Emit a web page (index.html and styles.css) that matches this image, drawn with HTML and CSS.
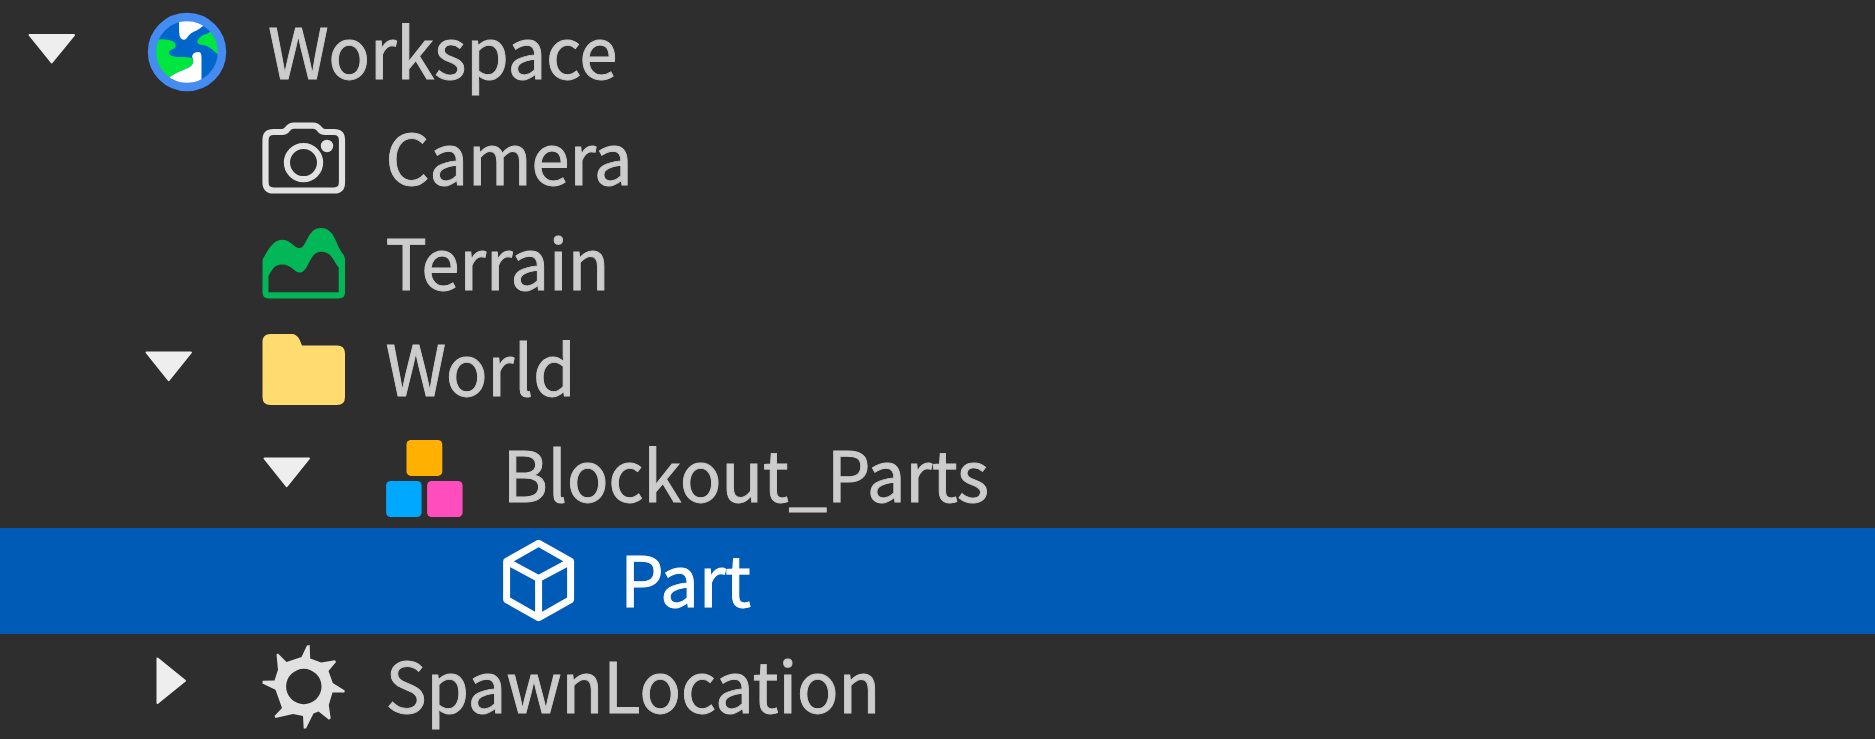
FILE: index.html
```html
<!DOCTYPE html>
<html lang="en">
<head>
<meta charset="utf-8">
<title>Explorer</title>
<link rel="stylesheet" href="styles.css">
</head>
<body>
<ul class="tree">
  <li class="row level-0">
    <svg class="twisty" viewBox="0 0 48 105.7"><path d="M1.5 35H46L23.700 62.5Z"/></svg>
    <svg class="icon" viewBox="0 0 84 105.7">
      <circle cx="42" cy="52" r="35" fill="#0066cc"/>
      <path fill="#fff" d="M34 20L48 18.500L60 25C56 27 54 29.500 50.500 31C45 33 43.500 36 41.500 38.500C39.500 40.500 36.500 40 35 37C34 34 34 29 34 20Z"/>
      <path fill="#00e640" d="M66 31C62 35 57 34 53.500 39C51 43 53 44.500 58 45C65 46 68 51 75 56L77 45Z"/>
      <path fill="#00e640" d="M11 40C16 38.500 25 39.500 29 42C32 45 31 48.500 27 49.500C23 50.500 23 54.500 27 56C33 58 40 56 47 58C50 62 48 65 43 68C36 71 30 73 25 78L12 70L8 50Z"/>
      <path fill="#fff" d="M24 78C30 73 36 71 43 68C48 65 49 63 48 59C46 56 48 52 53 52C56 52 56.500 54 56.500 58V80L42 86Z"/>
      <circle cx="42" cy="52" r="35" fill="none" stroke="#448bf2" stroke-width="8.400"/>
    </svg>
    <span class="label">Workspace</span>
  </li>
  <li class="row level-1">
    <span class="twisty"></span>
    <svg class="icon" viewBox="0 0 84 105.7">
      <g fill="none" stroke="#e1e1e1" stroke-width="6.200">
        <path d="M11.500 26H20C27 26 24 19.600 32 19.600H51C59 19.600 56 26 63 26H72Q80 26 80 34V76.500Q80 84.500 72 84.500H11.500Q3.500 84.500 3.500 76.500V34Q3.500 26 11.500 26Z"/>
        <circle cx="41.500" cy="56.600" r="16.600"/>
      </g>
      <circle cx="65" cy="40" r="6.200" fill="#e1e1e1"/>
    </svg>
    <span class="label">Camera</span>
  </li>
  <li class="row level-1">
    <span class="twisty"></span>
    <svg class="icon" viewBox="0 0 84 105.7">
      <path fill="#02b757" fill-rule="evenodd" d="M.5 48.500C4 43 6 37.500 11 33C16 28 23 27.500 28 31.500C32 34.500 34 37 37.500 37C45 37 45 17 59 17C73 17 74 35 81 43Q83 45.500 83 48V81.500Q83 87.400 77 87.400H6.500Q.5 87.400 .5 81.500ZM6.500 81.300H76.700V56.500C71 50 70 40.700 59 40.700C47 40.700 47 61.600 37.500 61.600C33 61.600 29 53.500 20 53.500C12 53.500 10 59 6.500 65Z"/>
    </svg>
    <span class="label">Terrain</span>
  </li>
  <li class="row level-1">
    <svg class="twisty" viewBox="0 0 48 105.7"><path d="M1.5 35.5H46L23.700 63.2Z"/></svg>
    <svg class="icon" viewBox="0 0 84 105.7">
      <path fill="#ffdb70" d="M8.500 17H30Q34.500 17 37.500 22.500L40 28.400H75Q83 28.400 83 36.400V80Q83 88 75 88H8.500Q.5 88 .5 80V25Q.5 17 8.500 17Z"/>
    </svg>
    <span class="label">World</span>
  </li>
  <li class="row level-2">
    <svg class="twisty" viewBox="0 0 48 105.7"><path d="M1.5 35.5H46L23.700 63.2Z"/></svg>
    <svg class="icon" viewBox="0 0 84 105.7">
      <rect x="26.500" y="16.900" width="35.800" height="36" rx="4.500" fill="#ffb000"/>
      <rect x="6.100" y="58" width="35.500" height="36" rx="4.500" fill="#00a8ff"/>
      <rect x="47.100" y="58" width="35.500" height="36" rx="4.500" fill="#ff4dbe"/>
    </svg>
    <span class="label">Blockout_Parts</span>
  </li>
  <li class="row level-3 selected">
    <span class="twisty"></span>
    <svg class="icon" viewBox="0 0 84 105.7">
      <path fill="none" stroke="#fff" stroke-width="7" stroke-linejoin="round" d="M41.600 15.200L73.600 33.400V71.600L41.600 89.800L9.600 71.600V33.400ZM9.600 33.400L41.600 50.500L73.600 33.400M41.600 50.500V89.800"/>
    </svg>
    <span class="label">Part</span>
  </li>
  <li class="row level-1">
    <svg class="twisty" viewBox="0 0 48 105.7"><path d="M12.500 24.500V69L40 46.800Z"/></svg>
    <svg class="icon" viewBox="0 0 84 105.7">
      <path fill="#e1e1e1" fill-rule="evenodd" d="M45 11.500L47.700 11L48.200 24.500L59.200 28.500L73 26.300L74 28L66.500 37L70.800 49L82.800 56.500L82.300 58.500L70.500 58.500L66.800 71L68.700 84.500L67 85.800L56.500 77.500L51.500 79.500L44 94.500L41.700 94.500L41 82L31 80L13.500 84L12.500 82L20 74L13.500 55.800L.4 49.500L.7 46.800L12.500 46.500L16 35.800L14.500 20.500L16 19.500L24.500 28L39.500 23ZM41.800 34.800A17.700 17.700 0 1 0 41.800 70.200A17.700 17.700 0 1 0 41.800 34.800Z"/>
    </svg>
    <span class="label">SpawnLocation</span>
  </li>
</ul>
</body>
</html>
```

FILE: styles.css
```css
html,
body {
  margin: 0;
  height: 100%;
  overflow: hidden;
  background: #2e2e2e;
}

.tree {
  margin: 0;
  padding: 0;
  list-style: none;
  font-family: "Noto Sans CJK SC", "Noto Sans", sans-serif;
  font-size: 69.2px;
  letter-spacing: -0.4px;
  -webkit-text-stroke: 0.9px currentColor;
  color: #cccccc;
}

.row {
  display: flex;
  align-items: center;
  box-sizing: border-box;
  height: 105.7px;
  padding-left: 28px;
}

.level-1 { padding-left: 145.4px; }
.level-2 { padding-left: 262.5px; }
.level-3 { padding-left: 380px; }

.selected {
  background: #005bb7;
  color: #ffffff;
}

.twisty {
  flex: none;
  width: 48px;
  height: 105.7px;
  fill: #eeeeee;
  stroke: #eeeeee;
  stroke-width: 2;
  stroke-linejoin: round;
}

.icon {
  flex: none;
  width: 84px;
  height: 105.7px;
  margin-left: 69px;
  overflow: visible;
}

.label {
  margin-left: 39px;
  padding-bottom: 7px;
  line-height: 98.7px;
  white-space: nowrap;
}
```
